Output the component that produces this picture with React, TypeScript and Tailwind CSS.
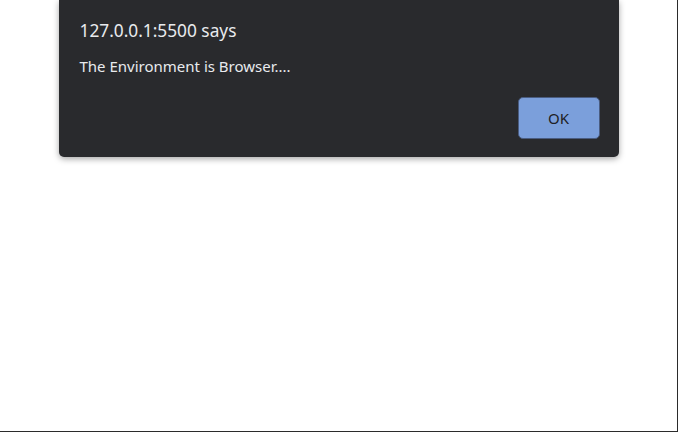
export default function App() {
  return (
    <div className="h-[432px] w-[678px] border-r border-b border-[#2b2b2b] bg-white font-['Noto_Sans',sans-serif]">
      <div className="flex justify-center">
        <div className="flex h-[157px] w-[560px] flex-col rounded-b-[5px] bg-[#292a2d] pl-[21px] pr-[19px] pt-[18px] shadow-[0_2px_6px_rgba(0,0,0,0.35)]">
          <div className="text-[17.3px] leading-[26px] text-[#e8eaed]">127.0.0.1:5500 says</div>
          <div className="mt-[12px] text-[15px] leading-[20px] text-[#e8eaed]">The Environment is Browser....</div>
          <div className="mt-auto mb-[18px] flex justify-end">
            <button className="h-[42px] w-[82px] rounded-[5px] border border-[#4a5c80] bg-[#7b9fdb] text-[15px] text-[#202124]">
              OK
            </button>
          </div>
        </div>
      </div>
    </div>
  )
}
